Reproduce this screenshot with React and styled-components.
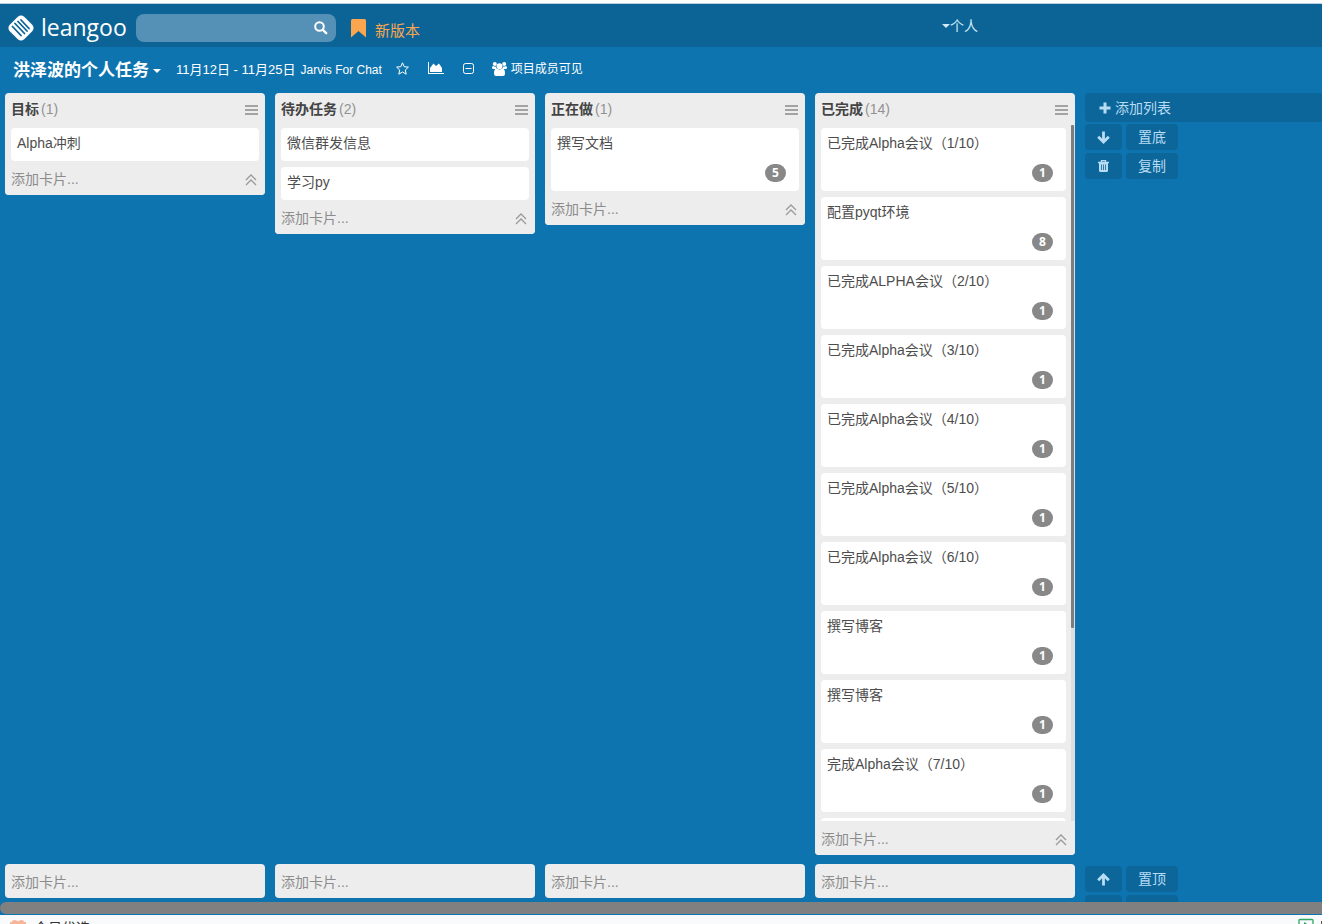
import { useEffect, useRef, useState } from "react";
import styled, { createGlobalStyle } from "styled-components";

const GlobalStyle = createGlobalStyle`
  * {
    box-sizing: border-box;
  }

  body {
    margin: 0;
    background: #fff;
    font-family: "Liberation Sans", "Noto Sans CJK SC", sans-serif;
    font-size: 14px;
    line-height: 20px;
    color: #4d4d4d;
  }

  button {
    font: inherit;
    color: inherit;
    border: none;
    background: none;
    padding: 0;
    cursor: pointer;
  }

  svg {
    display: block;
    flex: none;
  }
`;

const Page = styled.div`
  display: flex;
  flex-direction: column;
  height: 100vh;
  overflow: hidden;
  background: #0e74af;
`;

const TopEdge = styled.div`
  flex: none;
  height: 4px;
  background: #fff;
  border-bottom: 1px solid #b9d0e2;
`;

const Header = styled.header`
  flex: none;
  display: flex;
  align-items: center;
  height: 43px;
  padding: 5px 0 0 7px;
  background: #0c6496;
`;

const Logo = styled.a`
  display: flex;
  align-items: center;
  gap: 6px;
  width: 129px;
  color: #fff;
  font-family: "Open Sans", sans-serif;
  font-size: 23px;
  line-height: 28px;
  text-decoration: none;

  span {
    padding-bottom: 2px;
  }
`;

const SearchBox = styled.label`
  display: flex;
  align-items: center;
  width: 200px;
  height: 28px;
  padding-right: 8px;
  border-radius: 8px;
  background: #5591b6;
  color: #fff;

  input {
    flex: 1;
    min-width: 0;
    height: 28px;
    padding: 0 8px;
    border: none;
    outline: none;
    background: none;
    color: #fff;
  }
`;

const NewVersion = styled.a`
  display: flex;
  align-items: center;
  gap: 8px;
  margin-left: 15px;
  color: #f9a64f;
  font-size: 15px;
  text-decoration: none;

  span {
    padding-top: 5px;
  }
`;

const UserMenu = styled.button`
  display: flex;
  align-items: center;
  width: 380px;
  margin-left: auto;
  padding-bottom: 5px;
  color: #cfe9f5;
`;

const BoardBar = styled.nav`
  flex: none;
  display: flex;
  align-items: center;
  height: 46px;
  padding-left: 13px;
  color: #fff;
  font-size: 12px;
`;

const BoardTitle = styled.button`
  display: flex;
  align-items: center;
  gap: 4px;
  margin-right: 15px;
  padding-top: 1px;
  font-size: 17px;
  font-weight: bold;
`;

const Dates = styled.span`
  margin-right: 5px;
  font-size: 13px;
`;

const IconButton = styled.button`
  margin-left: ${(p) => p.$space}px;
  padding-bottom: 4px;
`;

const Visibility = styled.button`
  display: flex;
  align-items: center;
  gap: 4px;
  margin-left: 18px;
  padding-bottom: 2px;
`;

const Lane = styled.section`
  display: grid;
  grid-template-columns: repeat(4, 260px) 1fr;
  column-gap: 10px;
  align-items: start;
  padding-left: 5px;
  ${(p) =>
    p.$main
      ? "flex: 1; min-height: 0; grid-template-rows: minmax(0, 1fr); margin-bottom: 9px;"
      : "flex: none; height: 38px; overflow: hidden;"}
`;

const Column = styled.div`
  display: flex;
  flex-direction: column;
  max-height: 100%;
  border-radius: 4px;
  background: #ededed;
`;

const ColumnHead = styled.div`
  flex: none;
  display: flex;
  align-items: center;
  height: 32px;
  padding: 0 7px 0 6px;

  h2 {
    margin: 0;
    font-size: 14px;
    line-height: 20px;
    color: #444;
  }

  span {
    flex: 1;
    padding-left: 2px;
    color: #929292;
  }

  button {
    padding-top: 2px;
    color: #a3a3a3;
  }
`;

const ListWrap = styled.div`
  position: relative;
  display: flex;
  flex-direction: column;
  min-height: 0;
`;

const List = styled.ul`
  display: flex;
  flex-direction: column;
  gap: 6px;
  min-height: 0;
  margin: 0;
  padding: 3px ${(p) => (p.$scrolls ? 9 : 6)}px 0 6px;
  overflow-y: auto;
  list-style: none;
  scrollbar-width: none;

  &::-webkit-scrollbar {
    display: none;
  }
`;

const Track = styled.div`
  position: absolute;
  top: 0;
  right: 0;
  bottom: 0;
  width: 4px;
  background: #dedede;
`;

const Thumb = styled.div`
  width: 3px;
  border-radius: 1px;
  background: #7d7d7d;
`;

const CardItem = styled.li`
  flex: none;
  display: flex;
  flex-direction: column;
  justify-content: space-between;
  min-height: ${(p) => (p.$tall ? 63 : 33)}px;
  padding: 5px 13px ${(p) => (p.$tall ? 9 : 8)}px 6px;
  border-radius: 4px;
  background: #fff;
`;

const Badge = styled.span`
  align-self: flex-end;
  width: 21px;
  height: 18px;
  border-radius: 9px;
  background: #888;
  color: #fff;
  font-family: "Open Sans", sans-serif;
  font-size: 12px;
  font-weight: bold;
  line-height: 18px;
  text-align: center;
`;

const AddCard = styled.div`
  flex: none;
  display: flex;
  align-items: center;
  justify-content: space-between;
  height: 34px;
  padding: 1px 8px 0 6px;
  border-radius: 4px;
  background: #ededed;
  color: #8c8c8c;

  svg {
    margin-top: 2px;
  }
`;

const SideTools = styled.div`
  display: flex;
  flex-direction: column;
  gap: 3px;
  padding-top: ${(p) => p.$top || 0}px;
  color: #b7dcf4;
`;

const AddList = styled.button`
  display: flex;
  align-items: center;
  gap: 4px;
  height: 29px;
  padding-left: 14px;
  margin-bottom: -1px;
  border-radius: 4px 0 0 4px;
  background: #0c6699;
`;

const ToolRow = styled.div`
  display: flex;
  gap: 4px;
`;

const ToolButton = styled.button`
  display: flex;
  align-items: center;
  justify-content: center;
  width: ${(p) => (p.$wide ? 52 : 37)}px;
  height: 26px;
  border-radius: 4px;
  background: #0c6699;
`;

const BottomScroll = styled.div`
  flex: none;
  height: 12px;
  margin-bottom: 1px;
  border-radius: 6px 0 0 6px;
  background: #808080;
`;

const Footer = styled.footer`
  flex: none;
  display: flex;
  align-items: flex-start;
  height: 9px;
  padding: 3px 0 0 10px;
  overflow: hidden;
  background: #f8fafc;
  color: #333;

  span {
    flex: 1;
    padding-left: 8px;
    line-height: 20px;
  }
`;

const Caret = ({ size = 8 }) => (
  <svg width={size} height={size / 2} viewBox="0 0 8 4" fill="currentColor">
    <path d="M0 0h8L4 4z" />
  </svg>
);

const LogoMark = () => (
  <svg width="28" height="28" viewBox="0 0 28 28">
    <rect x="3.800" y="3.800" width="20.400" height="20.400" rx="4.500" fill="#fff" transform="rotate(45 14 14)" />
    <path
      d="M5.500 12.500l8.500 9M8 9.500l9.500 10M11 7.500l9 9.500M14 6l8 8.500"
      stroke="#0c6496"
      strokeWidth="1.800"
      strokeLinecap="round"
    />
  </svg>
);

const SearchIcon = () => (
  <svg width="14" height="14" viewBox="0 0 14 14" fill="none" stroke="currentColor" strokeLinecap="round">
    <circle cx="5.500" cy="5.500" r="4.300" strokeWidth="2" />
    <path d="M9 9l3.200 3.200" strokeWidth="2.400" />
  </svg>
);

const BookmarkIcon = () => (
  <svg width="16" height="19" viewBox="0 0 16 19" fill="currentColor">
    <path d="M1.500 0h12Q15 0 15 1.500V18.500l-7.500-6.500L0 18.500V1.500Q0 0 1.500 0z" />
  </svg>
);

const StarIcon = () => (
  <svg width="13" height="13" viewBox="0 0 13 13" fill="none" stroke="currentColor" strokeLinejoin="round">
    <path d="M6.500.8l1.700 3.900 4.200.4-3.100 2.900.9 4.200-3.700-2.200-3.700 2.200.9-4.200L.6 5.100l4.200-.4z" />
  </svg>
);

const ChartIcon = () => (
  <svg width="16" height="12" viewBox="0 0 16 12" fill="currentColor">
    <path d="M0 0h1v11h15v1H0z" />
    <path d="M2 10V6l3.500-4.500L8 4l3-2.500L14 6v4z" />
  </svg>
);

const MinusSquareIcon = () => (
  <svg width="11" height="11" viewBox="0 0 11 11" fill="none" stroke="currentColor">
    <rect x=".5" y=".5" width="10" height="10" rx="2" />
    <path d="M2.500 5.500h6" />
  </svg>
);

const UsersIcon = () => (
  <svg width="15" height="14" viewBox="0 0 15 14" fill="currentColor">
    <circle cx="2.800" cy="2" r="2" />
    <circle cx="12.200" cy="2" r="2" />
    <circle cx="7.500" cy="4.200" r="2.900" />
    <path d="M0 5.500Q0 4 1.200 4q1.500 1 2.800.6Q4 6 4.800 7H1.200Q0 7 0 5.500zM15 5.500Q15 4 13.800 4q-1.500 1-2.800.6Q11 6 10.200 7h3.600Q15 7 15 5.500z" />
    <path d="M2 11.500Q2 6.500 4.800 6.500q2.700 1.800 5.400 0 2.800 0 2.800 5 0 2.500-2 2.500H4q-2 0-2-2.500z" />
  </svg>
);

const MenuIcon = () => (
  <svg width="13" height="10" viewBox="0 0 13 10" fill="currentColor">
    <path d="M0 0h13v2H0zM0 4h13v2H0zM0 8h13v2H0z" />
  </svg>
);

const ChevronsUp = () => (
  <svg width="12" height="12" viewBox="0 0 12 12" fill="none" stroke="#9a9a9a" strokeWidth="1.300">
    <path d="M1 6l5-5 5 5M1 11l5-5 5 5" />
  </svg>
);

const PlusIcon = () => (
  <svg width="12" height="12" viewBox="0 0 12 12" fill="currentColor">
    <path d="M4.500.5h3v4h4v3h-4v4h-3v-4h-4v-3h4z" />
  </svg>
);

const ArrowIcon = ({ up }) => (
  <svg width="13" height="13" viewBox="0 0 13 13" fill="none" stroke="currentColor" strokeWidth="2.800">
    <path d={up ? "M6.500 12.500V2.500M1.200 7.300L6.500 2l5.300 5.300" : "M6.500.5v10M1.200 5.700L6.500 11l5.300-5.300"} />
  </svg>
);

const TrashIcon = () => (
  <svg width="11" height="12" viewBox="0 0 11 12" fill="none" stroke="currentColor">
    <path d="M0 2.500h11" strokeWidth="1.500" />
    <path d="M3.500 2V.7h4V2" strokeWidth="1.300" />
    <path d="M1 3h9v7.500q0 1.500-1.500 1.500h-6Q1 12 1 10.500z" fill="currentColor" stroke="none" />
    <path d="M3.500 4.500v5.500M5.500 4.500v5.500M7.500 4.500v5.500" stroke="#0c6699" strokeWidth=".8" />
  </svg>
);

const GiftIcon = () => (
  <svg width="16" height="16" viewBox="0 0 16 16" fill="#f8b498">
    <path d="M2 4Q2 2 4.500 2T8 3.500Q9 2 11.500 2T14 4h2v4H0V4zM1 8h14v8H1z" />
  </svg>
);

const PlayIcon = () => (
  <svg width="24" height="14" viewBox="0 0 24 14" fill="none">
    <rect x="1" y="1.500" width="14" height="12" rx="1" stroke="#2fa866" strokeWidth="1.300" />
    <path d="M6 4l5 3-5 3z" fill="#2fa866" />
    <path d="M23.500 3v11" stroke="#555" />
  </svg>
);

const blank = { tall: true };

const columns = [
  { title: "目标", cards: [{ name: "Alpha冲刺" }] },
  { title: "待办任务", cards: [{ name: "微信群发信息" }, { name: "学习py" }] },
  { title: "正在做", cards: [{ name: "撰写文档", points: 5 }] },
  {
    title: "已完成",
    cards: [
      { name: "已完成Alpha会议（1/10）", points: 1 },
      { name: "配置pyqt环境", points: 8 },
      { name: "已完成ALPHA会议（2/10）", points: 1 },
      { name: "已完成Alpha会议（3/10）", points: 1 },
      { name: "已完成Alpha会议（4/10）", points: 1 },
      { name: "已完成Alpha会议（5/10）", points: 1 },
      { name: "已完成Alpha会议（6/10）", points: 1 },
      { name: "撰写博客", points: 1 },
      { name: "撰写博客", points: 1 },
      { name: "完成Alpha会议（7/10）", points: 1 },
      blank,
      blank,
      blank,
      blank,
    ],
  },
];

function CardList({ cards }) {
  const ref = useRef(null);
  const [bar, setBar] = useState(null);

  const measure = () => {
    const { scrollTop, scrollHeight, clientHeight } = ref.current;
    setBar(
      scrollHeight > clientHeight
        ? { top: (scrollTop / scrollHeight) * clientHeight, height: (clientHeight / scrollHeight) * clientHeight }
        : null
    );
  };

  useEffect(() => {
    measure();
    window.addEventListener("resize", measure);
    return () => window.removeEventListener("resize", measure);
  }, []);

  return (
    <ListWrap>
      <List ref={ref} onScroll={measure} $scrolls={!!bar}>
        {cards.map((card, i) => (
          <CardItem key={i} $tall={!!card.points || card.tall}>
            {card.name}
            {card.points && <Badge>{card.points}</Badge>}
          </CardItem>
        ))}
      </List>
      {bar && (
        <Track>
          <Thumb style={{ height: bar.height, marginTop: bar.top }} />
        </Track>
      )}
    </ListWrap>
  );
}

function App() {
  return (
    <Page>
      <GlobalStyle />
      <TopEdge />
      <Header>
        <Logo href="#">
          <LogoMark />
          <span>leangoo</span>
        </Logo>
        <SearchBox>
          <input type="text" aria-label="搜索" />
          <SearchIcon />
        </SearchBox>
        <NewVersion href="#">
          <BookmarkIcon />
          <span>新版本</span>
        </NewVersion>
        <UserMenu>
          <Caret />
          个人
        </UserMenu>
      </Header>

      <BoardBar>
        <BoardTitle>
          洪泽波的个人任务
          <Caret />
        </BoardTitle>
        <Dates>11月12日 - 11月25日</Dates>
        <span>Jarvis For Chat</span>
        <IconButton $space={14} aria-label="收藏">
          <StarIcon />
        </IconButton>
        <IconButton $space={19} aria-label="图表">
          <ChartIcon />
        </IconButton>
        <IconButton $space={19} aria-label="收起">
          <MinusSquareIcon />
        </IconButton>
        <Visibility>
          <UsersIcon />
          项目成员可见
        </Visibility>
      </BoardBar>

      <Lane $main>
        {columns.map((col) => (
          <Column key={col.title}>
            <ColumnHead>
              <h2>{col.title}</h2>
              <span>({col.cards.length})</span>
              <button aria-label="菜单">
                <MenuIcon />
              </button>
            </ColumnHead>
            <CardList cards={col.cards} />
            <AddCard>
              <button>添加卡片...</button>
              <button aria-label="收起列表">
                <ChevronsUp />
              </button>
            </AddCard>
          </Column>
        ))}
        <SideTools>
          <AddList>
            <PlusIcon />
            添加列表
          </AddList>
          <ToolRow>
            <ToolButton aria-label="下移">
              <ArrowIcon />
            </ToolButton>
            <ToolButton $wide>置底</ToolButton>
          </ToolRow>
          <ToolRow>
            <ToolButton aria-label="删除">
              <TrashIcon />
            </ToolButton>
            <ToolButton $wide>复制</ToolButton>
          </ToolRow>
        </SideTools>
      </Lane>

      <Lane>
        {columns.map((col) => (
          <AddCard key={col.title}>
            <button>添加卡片...</button>
          </AddCard>
        ))}
        <SideTools $top={2}>
          <ToolRow>
            <ToolButton aria-label="上移">
              <ArrowIcon up />
            </ToolButton>
            <ToolButton $wide>置顶</ToolButton>
          </ToolRow>
          <ToolRow>
            <ToolButton aria-label="更多" />
            <ToolButton $wide aria-label="更多操作" />
          </ToolRow>
        </SideTools>
      </Lane>

      <BottomScroll />
      <Footer>
        <GiftIcon />
        <span>今日优选</span>
        <PlayIcon />
      </Footer>
    </Page>
  );
}

export default App;
